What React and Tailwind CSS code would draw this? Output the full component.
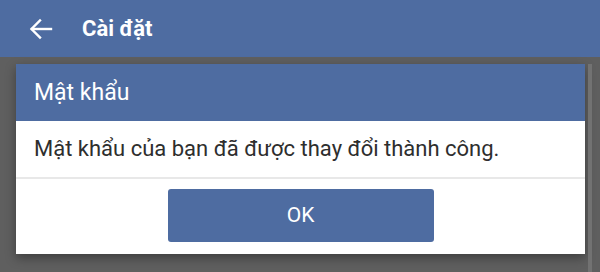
export default function App() {
  return (
    <div className="w-[600px] h-[272px] bg-[#5f5f5f] flex flex-col overflow-hidden font-['Roboto',sans-serif]">
      {/* Top bar */}
      <div className="h-[57px] bg-[#4e6ca1] flex items-center shrink-0">
        <svg width="24" height="22" viewBox="0 0 24 22" className="ml-[29px] text-white" fill="none" stroke="currentColor" strokeWidth="2.4" strokeLinecap="square">
          <path d="M22 11H3" />
          <path d="M11 2.5L2.5 11L11 19.5" />
        </svg>
        <span className="ml-[29px] text-white text-[22px] font-bold leading-none">Cài đặt</span>
      </div>

      {/* Dialog area */}
      <div className="flex-1 flex pt-[7px] pl-4">
        <div className="w-[569px] h-[190px] bg-white shadow-[0_4px_10px_rgba(0,0,0,0.35)] flex flex-col">
          <div className="h-[57px] bg-[#4e6ca1] flex items-center px-[18px]">
            <span className="text-white text-[23px] leading-none">Mật khẩu</span>
          </div>
          <div className="h-[58px] flex items-center px-[18px] border-b-2 border-[#e8e8e8]">
            <span className="text-[#2e2e2e] text-[22px] leading-none">Mật khẩu của bạn đã được thay đổi thành công.</span>
          </div>
          <div className="flex-1 flex justify-center pt-[10px]">
            <button className="w-[266px] h-[53px] bg-[#4e6ca1] rounded-[3px] text-white text-[21px]">OK</button>
          </div>
        </div>
        <div className="ml-[3px] w-[4px] bg-[#727272]" />
      </div>
    </div>
  );
}
